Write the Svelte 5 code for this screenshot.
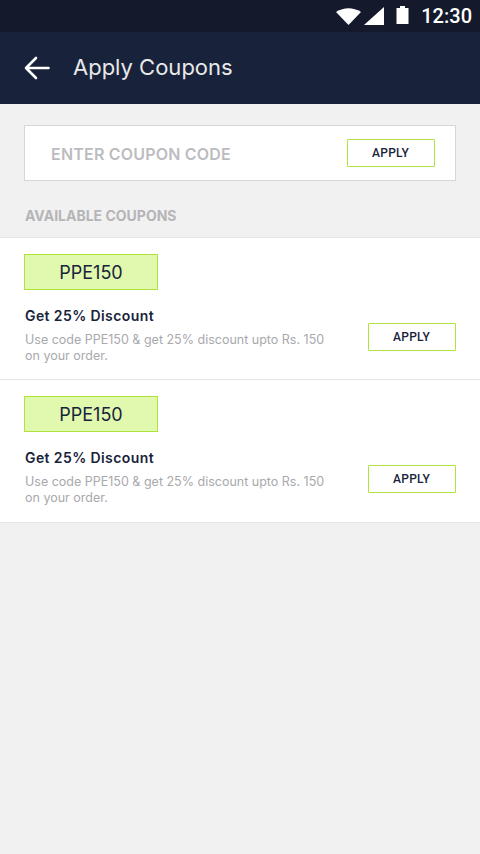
<script lang="ts">
  const coupons = [
    { code: 'PPE150', title: 'Get 25% Discount', text: 'Use code PPE150 & get 25% discount upto Rs. 150 on your order.' },
    { code: 'PPE150', title: 'Get 25% Discount', text: 'Use code PPE150 & get 25% discount upto Rs. 150 on your order.' }
  ];
</script>

<div class="screen">
  <div class="status-bar">
    <svg class="wifi" width="25" height="17" viewBox="0 0 25 17"><path d="M0 4 Q12.5 -3.5 25 4 L12.5 17 Z" fill="#fff" /></svg>
    <svg class="signal" width="20" height="18" viewBox="0 0 20 18"><path d="M0 18 L20 0 V18 Z" fill="#fff" /></svg>
    <svg class="battery" width="13" height="18" viewBox="0 0 13 18"><path d="M4 0 H9 V2 H12.5 V18 H0.5 V2 H4 Z" fill="#fff" /></svg>
    <span class="time">12:30</span>
  </div>

  <header class="app-bar">
    <svg class="back" width="26" height="24" viewBox="0 0 26 24">
      <path d="M24.5 12 H2.5 M12 2 L2 12 L12 22" fill="none" stroke="#fff" stroke-width="2.6" stroke-linecap="round" stroke-linejoin="round" />
    </svg>
    <span class="page-title">Apply Coupons</span>
  </header>

  <div class="code-card">
    <span class="code-placeholder">ENTER COUPON CODE</span>
    <button class="apply">APPLY</button>
  </div>

  <div class="section-label">AVAILABLE COUPONS</div>

  <div class="coupon-list">
    {#each coupons as coupon}
      <div class="coupon">
        <div class="coupon-code">{coupon.code}</div>
        <div class="coupon-body">
          <div class="coupon-info">
            <div class="coupon-title">{coupon.title}</div>
            <div class="coupon-text">{coupon.text}</div>
          </div>
          <button class="apply">APPLY</button>
        </div>
      </div>
    {/each}
  </div>
</div>

<style>
  :global(body) {
    margin: 0;
    background: #f1f1f1;
  }

  .screen {
    width: 480px;
    height: 854px;
    overflow: hidden;
    background: #f1f1f1;
    font-family: Inter, "Liberation Sans", sans-serif;
  }

  .status-bar {
    height: 32px;
    background: #141a2c;
    display: flex;
    align-items: center;
    justify-content: flex-end;
    padding-right: 8px;
    box-sizing: border-box;
  }

  .wifi {
    margin-right: 3px;
    margin-top: 1px;
  }

  .signal {
    margin-right: 12px;
  }

  .battery {
    margin-right: 12px;
    margin-top: -2px;
  }

  .time {
    font-family: Roboto, sans-serif;
    font-size: 20px;
    font-weight: 500;
    color: #fff;
  }

  .app-bar {
    height: 72px;
    background: #18233b;
    display: flex;
    align-items: center;
    padding-left: 24px;
  }

  .back {
    margin-right: 23px;
  }

  .page-title {
    font-size: 22px;
    font-weight: 400;
    color: #e9e9ea;
    margin-top: -2px;
  }

  .code-card {
    margin: 21px 24px 0;
    height: 56px;
    box-sizing: border-box;
    background: #fff;
    border: 1px solid #d6d6d6;
    display: flex;
    align-items: center;
    justify-content: space-between;
    padding: 0 20px 0 26px;
  }

  .code-placeholder {
    font-size: 16px;
    font-weight: 600;
    color: #bcbcc0;
    letter-spacing: 0.2px;
    margin-top: 2px;
  }

  .apply {
    width: 88px;
    height: 28px;
    box-sizing: border-box;
    padding: 0 1px 0 0;
    flex-shrink: 0;
    background: #fff;
    border: 1px solid #aee33e;
    border-radius: 1px;
    font-family: Roboto, sans-serif;
    font-size: 12px;
    font-weight: 500;
    color: #18233b;
    letter-spacing: 0.3px;
  }

  .section-label {
    margin: 27px 25px 13px;
    font-size: 14px;
    line-height: 16px;
    font-weight: 700;
    color: #b5b5b8;
  }

  .coupon-list {
    background: #fff;
    border-top: 1px solid #e6e6e6;
    border-bottom: 1px solid #e6e6e6;
  }

  .coupon {
    padding: 16px 24px 15px;
  }

  .coupon + .coupon {
    border-top: 1px solid #e6e6e6;
    padding-bottom: 16px;
  }

  .coupon-code {
    width: 134px;
    height: 36px;
    box-sizing: border-box;
    background: #e0f9ae;
    border: 1px solid #aee33e;
    display: flex;
    align-items: center;
    justify-content: center;
    font-size: 18px;
    font-weight: 400;
    color: #18233b;
  }

  .coupon-body {
    display: flex;
    align-items: center;
    justify-content: space-between;
    margin-top: 16px;
  }

  .coupon-body .apply {
    margin-top: 4px;
  }

  .coupon-info {
    width: 308px;
    padding-left: 1px;
  }

  .coupon-title {
    font-size: 14px;
    line-height: 20px;
    font-weight: 600;
    color: #18233b;
    letter-spacing: 0.4px;
  }

  .coupon-text {
    margin-top: 6px;
    font-size: 12.5px;
    line-height: 16px;
    color: #a9a9ad;
  }
</style>
